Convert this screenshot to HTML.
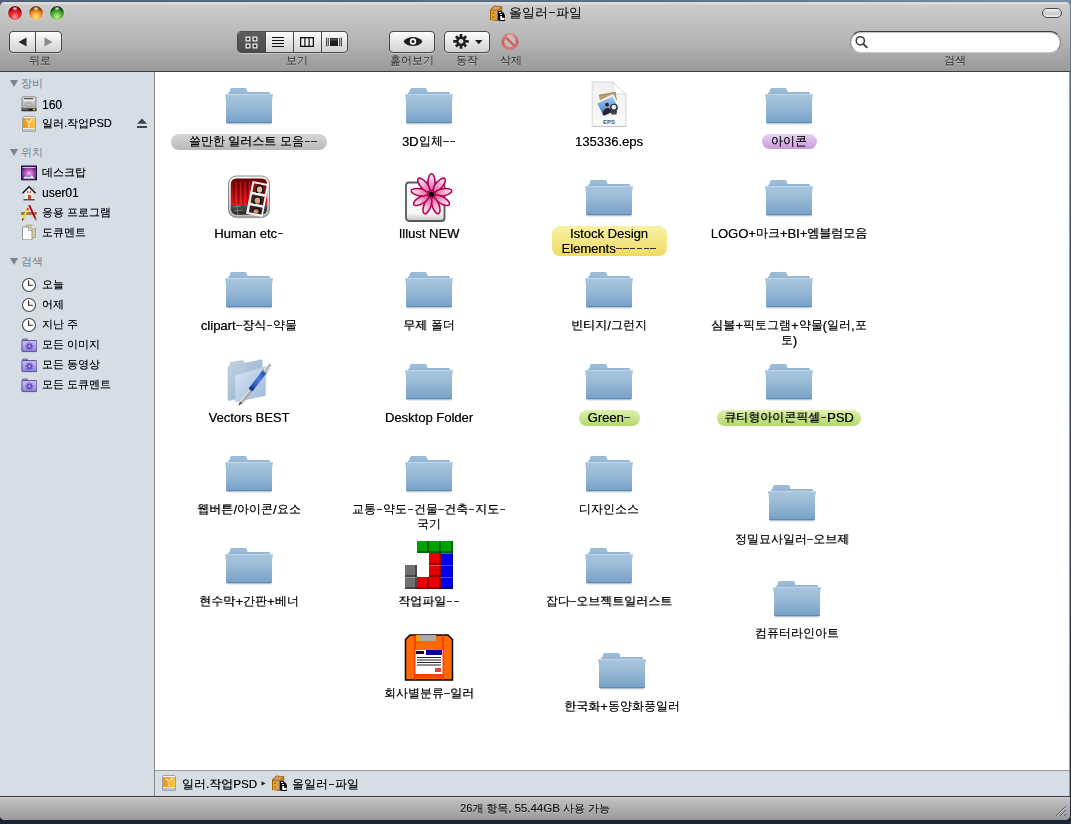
<!DOCTYPE html>
<html><head><meta charset="utf-8">
<style>
*{box-sizing:border-box}
html,body{margin:0;padding:0;width:1071px;height:824px;overflow:hidden;background:#2a3648;font-family:"Liberation Sans",sans-serif}
.abs{position:absolute}
#desk-top{position:absolute;left:0;top:0;width:1071px;height:4px;background:linear-gradient(90deg,#4f6277,#5b7185 60%,#7a92a6)}
#desk-right{position:absolute;left:1069px;top:0;width:2px;height:824px;background:linear-gradient(180deg,#6e8598,#3c4a58 30%,#202a36)}
#desk-bot{position:absolute;left:0;top:818px;width:1071px;height:6px;background:#1d2535}
#win{position:absolute;left:0;top:2px;width:1070px;height:818px;border-radius:5px 5px 5px 5px;overflow:hidden;background:#d6dde5}
#tb{position:absolute;left:0;top:0;width:1070px;height:69px;background:linear-gradient(180deg,#e6e6e6 0px,#cbcbcb 2px,#c4c4c4 14px,#b3b3b3 40px,#989898 69px);border-top:1px solid #d8d8d8}
#tbline{position:absolute;left:0;top:69px;width:1070px;height:1px;background:#404040}
#sidebar{position:absolute;left:0;top:70px;width:154px;height:724px;background:#d6dde5}
#divider{position:absolute;left:154px;top:70px;width:1px;height:724px;background:#8a8a8a}
#content{position:absolute;left:155px;top:70px;width:914px;height:698px;background:#fff}
#rightedge{position:absolute;left:1069px;top:70px;width:1px;height:724px;background:#9a9a9a}
#pathline{position:absolute;left:155px;top:768px;width:914px;height:1px;background:#9a9a9a}
#pathbar{position:absolute;left:155px;top:769px;width:914px;height:25px;background:#d6dde5}
#statline{position:absolute;left:0;top:794px;width:1070px;height:1px;background:#3c3c3c}
#status{position:absolute;left:0;top:795px;width:1070px;height:23px;background:linear-gradient(180deg,#dedede 0,#c2c2c2 1px,#b4b4b4 8px,#9a9a9a 23px)}
.lights span{position:absolute;top:3px;width:14px;height:14px;border-radius:50%}
.tl{will-change:transform;font-size:11px;color:#2a2a2a;position:absolute;text-shadow:0 1px 0 rgba(255,255,255,.35);white-space:nowrap;text-align:center}
.btn{position:absolute;top:29px;height:22px;border:1px solid #4a4a4a;border-radius:4px;background:linear-gradient(180deg,#fdfdfd,#e6e6e6 50%,#d2d2d2);box-shadow:0 1px 0 rgba(255,255,255,.35)}
.side-h{position:absolute;left:10px;font-size:11px;color:#747d8c;white-space:nowrap}
.side-h i{display:inline-block;width:0;height:0;border-left:4.5px solid transparent;border-right:4.5px solid transparent;border-top:7px solid #7c8291;margin-right:3px;vertical-align:0px}
.side-i{position:absolute;left:42px;font-size:11px;color:#000;white-space:nowrap;line-height:14px;will-change:transform;text-shadow:0.3px 0 0 rgba(0,0,0,.5)}
.sico{position:absolute;left:21px;width:16px;height:16px}
.ic{position:absolute;width:48px;height:48px}
.ic svg{overflow:visible;display:block}
.lbl{position:absolute;width:180px;text-align:center;font-size:12px;color:#000;line-height:15px;white-space:nowrap;will-change:transform;text-shadow:0.35px 0 0 rgba(0,0,0,.55)}
.lbl span{display:inline-block;padding:0.5px 0}
.lt{font-style:normal;font-size:13px;line-height:14px;position:relative;top:1px}
.hy{display:inline-block;width:5.3px;height:1px;background:#333;margin:0 0.75px;vertical-align:3.5px}
.pill{position:absolute;border-radius:8px}
.pill.gray{background:linear-gradient(180deg,#d6d6d6,#b9b9b9)}
.pill.purple{background:linear-gradient(180deg,#e8d0f2,#c79bd9)}
.pill.yellow{background:linear-gradient(180deg,#f9f1a6,#efdb62)}
.pill.green{background:linear-gradient(180deg,#def0ae,#b3d768)}
.ls{font-style:normal;font-size:12px;position:relative;top:1px}
</style></head><body>
<svg width="0" height="0" style="position:absolute">
<defs>
 <linearGradient id="gfront" x1="0" y1="0" x2="0" y2="1">
  <stop offset="0" stop-color="#a9c6dd"/><stop offset="0.45" stop-color="#98b9d5"/><stop offset="1" stop-color="#75a0c6"/>
 </linearGradient>
 <linearGradient id="gback" x1="0" y1="0" x2="0" y2="1">
  <stop offset="0" stop-color="#9bbcd7"/><stop offset="1" stop-color="#7aa3c8"/>
 </linearGradient>
 <symbol style="overflow:visible" id="i-folder" viewBox="0 0 48 48">
  <path d="M3,13.5 L3,42 L45,42 L45,13.5 C45,12.5 44.5,12 43.5,12 L22.5,12 L21.5,8.8 C21.3,8.2 20.8,8 20.2,8 L6.5,8 C5.9,8 5.4,8.3 5.2,8.9 L4.3,12.2 C3.5,12.5 3,13 3,13.5 Z" fill="url(#gback)"/>
  <path d="M0,15.2 C0,14.4 0.5,14 1.5,14 L46.5,14 C47.5,14 48,14.4 48,15.2 C47.2,17.5 47,20 47,23 L47,41.8 C47,42.6 46.5,43.2 45.6,43.2 L2.4,43.2 C1.5,43.2 1,42.6 1,41.8 L1,23 C1,20 0.8,17.5 0,15.2 Z" fill="url(#gfront)"/>
  <path d="M1.3,42.6 L46.7,42.6" stroke="#5f89b0" stroke-width="1.2"/>
  <path d="M1,14.5 L47,14.5" stroke="#c3d8e8" stroke-width="0.8"/>
  <path d="M2,44.2 L46,44.2" stroke="rgba(0,0,0,0.10)" stroke-width="1.2"/>
 </symbol>
 <symbol style="overflow:visible" id="i-eps" viewBox="0 0 48 48">
  <linearGradient id="gdoc" x1="0" y1="0" x2="0" y2="1"><stop offset="0" stop-color="#f0f0f0"/><stop offset="1" stop-color="#fafafa"/></linearGradient>
  <linearGradient id="gsky" x1="0" y1="0" x2="0" y2="1"><stop offset="0" stop-color="#a8c8f0"/><stop offset="0.6" stop-color="#6a9ad8"/><stop offset="1" stop-color="#3a62b0"/></linearGradient>
  <path d="M7.2,2 L27.5,2 L41,14.5 L41,46.3 L7.2,46.3 Z" fill="url(#gdoc)" stroke="#cfcfcf" stroke-width="0.8"/>
  <path d="M7.2,46.6 L41,46.6" stroke="#bbb" stroke-width="0.8"/>
  <path d="M27.5,2 C28.5,7 28,12 28.5,14 C32,13 37,14 41,14.5 Z" fill="#fff" stroke="#c8c8c8" stroke-width="0.6"/>
  <g transform="translate(24,26) scale(0.86) translate(-25.8,-27.6)"><path d="M14,14.5 L33.5,11 L35,21 L16,24Z" fill="#a08a5a"/>
  <path d="M14.5,16 L33,12.5 L34,19 L16,22Z" fill="#c8b080" opacity="0.6"/>
  <path d="M9.5,24 L30.5,14 L39.5,31 L18.5,41 Z" fill="#fff" stroke="#e0e0e0" stroke-width="0.5"/>
  <path d="M12,24.8 L29.8,16.4 L37,30.3 L19.2,38.7 Z" fill="url(#gsky)"/>
  <circle cx="23.5" cy="26" r="2.2" fill="#2a2020"/>
  <path d="M18.5,37 C19,31 23,28.5 26.5,30.5 L29,35 L20,39Z" fill="#262230"/>
  <circle cx="31.5" cy="29.5" r="4.4" fill="#2e2e2e"/>
  <circle cx="31.5" cy="29" r="2.8" fill="#e8eef8"/>
  <path d="M27.8,32.8 L35.2,32.8 L34.5,37.5 L28.5,37.5Z" fill="#444"/>
  </g>
  <text x="24" y="43.5" font-size="6" font-family="Liberation Sans" text-anchor="middle" fill="#555" font-weight="bold">EPS</text>
 </symbol>
 <symbol style="overflow:visible" id="i-photo" viewBox="0 0 48 48">
  <linearGradient id="gpf" x1="0" y1="0" x2="0" y2="1"><stop offset="0" stop-color="#fafafa"/><stop offset="1" stop-color="#bdbdbd"/></linearGradient>
  <linearGradient id="gcur" x1="0" y1="0" x2="0" y2="1"><stop offset="0" stop-color="#6a0206"/><stop offset="0.35" stop-color="#b00a10"/><stop offset="0.72" stop-color="#f01818"/><stop offset="0.73" stop-color="#505050"/><stop offset="1" stop-color="#2a2a2a"/></linearGradient>
  <rect x="3" y="4.2" width="42" height="42" rx="8.5" fill="#555" opacity="0.35"/>
  <rect x="3.5" y="4" width="41" height="41" rx="8" fill="url(#gpf)" stroke="#7a7a7a" stroke-width="0.9"/>
  <rect x="5.8" y="6.5" width="36.4" height="36.2" rx="5.5" fill="url(#gcur)"/>
  <g stroke="#5a0004" stroke-opacity="0.55" stroke-width="1.3">
   <path d="M9,7 V32 M13.5,7 V32 M18,7 V32 M22.5,7 V32 M27,7 V32 M40,7 V32"/>
  </g>
  <g stroke="#ff4a3a" stroke-opacity="0.35" stroke-width="1">
   <path d="M11,10 V32 M15.5,10 V32 M20,10 V32 M24.5,10 V32"/>
  </g>
  <path d="M8,35 L16,34 M9,39 L18,38 M12,33 L13,43" stroke="#888" stroke-width="0.8"/>
  <path d="M27.5,9 L44,12.2 L37.5,45 L21,41.8 Z" fill="#f6f6f6"/>
  <path d="M29,11.3 L41.6,13.7 L40,22.2 L27.4,19.8Z" fill="#8a1010"/>
  <path d="M27,22.3 L39.6,24.7 L38,33.2 L25.4,30.8Z" fill="#3a2a24"/>
  <path d="M25,33.3 L37.6,35.7 L36.4,42.6 L23.8,40.2Z" fill="#3a2422"/>
  <path d="M31,21 C30,15 32,12 35,12.5 C38,13 39,16 38.5,21Z" fill="#1a1414"/>
  <ellipse cx="34.6" cy="17.6" rx="2.6" ry="3.2" fill="#e8b8a0"/>
  <path d="M28.5,32 C28,26 30,23.5 33,24 C36,24.5 37,27 36.5,32Z" fill="#141010"/>
  <ellipse cx="32.4" cy="28.6" rx="2.8" ry="3.2" fill="#d8a080"/>
  <path d="M27,40 C27,37 29,35 32,35.5 C35,36 36,38 35.5,41Z" fill="#1a1212"/>
  <ellipse cx="31" cy="39.5" rx="2.6" ry="2.2" fill="#d09070"/>
 </symbol>
 <symbol style="overflow:visible" id="i-flower" viewBox="0 0 48 48">
  <linearGradient id="gpet" x1="0" y1="0" x2="1" y2="0"><stop offset="0" stop-color="#e25a9c"/><stop offset="0.55" stop-color="#f4b4d2"/><stop offset="1" stop-color="#fdf0f6"/></linearGradient>
  <linearGradient id="gsq" x1="0" y1="0" x2="0" y2="1"><stop offset="0" stop-color="#fff"/><stop offset="0.8" stop-color="#f6f6f6"/><stop offset="1" stop-color="#c4c4c4"/></linearGradient>
  <rect x="1" y="10.5" width="38.5" height="38.5" rx="3" fill="url(#gsq)" stroke="#5a5a5a" stroke-width="1.8"/>
  <g transform="translate(26.5,22.3)" stroke="#b8005a" stroke-width="1.6" fill="url(#gpet)">
   <ellipse cx="12" cy="0" rx="8.6" ry="3.5" transform="rotate(-90)"/>
   <ellipse cx="12" cy="0" rx="8.6" ry="3.5" transform="rotate(-50)"/>
   <ellipse cx="12" cy="0" rx="8.6" ry="3.5" transform="rotate(-10)"/>
   <ellipse cx="12" cy="0" rx="8.6" ry="3.5" transform="rotate(30)"/>
   <ellipse cx="12" cy="0" rx="8.6" ry="3.5" transform="rotate(70)"/>
   <ellipse cx="12" cy="0" rx="8.6" ry="3.5" transform="rotate(110)"/>
   <ellipse cx="12" cy="0" rx="8.6" ry="3.5" transform="rotate(150)"/>
   <ellipse cx="12" cy="0" rx="8.6" ry="3.5" transform="rotate(190)"/>
   <ellipse cx="12" cy="0" rx="8.6" ry="3.5" transform="rotate(230)"/>
  </g>
  <circle cx="26.5" cy="22.3" r="2.8" fill="#000"/>
 </symbol>
 <symbol style="overflow:visible" id="i-vectors" viewBox="0 0 48 48">
  <linearGradient id="gvb" x1="0" y1="0" x2="1" y2="1"><stop offset="0" stop-color="#c4d4e6"/><stop offset="1" stop-color="#8eaacb"/></linearGradient>
  <linearGradient id="gvf" x1="0" y1="0" x2="1" y2="1"><stop offset="0" stop-color="#d8e6f4"/><stop offset="1" stop-color="#9cb9d8"/></linearGradient>
  <linearGradient id="gpen" x1="0" y1="0" x2="1" y2="0"><stop offset="0" stop-color="#1a3a9a"/><stop offset="0.5" stop-color="#4a7ae0"/><stop offset="1" stop-color="#1a3a9a"/></linearGradient>
  <path d="M3,12 C3,11 3.5,10.5 4.5,10.2 L5.5,6.5 L18,4.5 L19.5,7.2 L36,3.8 C36.8,3.7 37.2,4 37.2,4.8 L37.2,37.5 L4,44.5 C3.4,44.6 3,44.2 3,43.6 Z" fill="url(#gvb)" stroke="#a8bcd0" stroke-width="0.5"/>
  <path d="M10,19.3 L41,10.5 L40.5,39.7 L10.3,46 Z" fill="url(#gvf)" stroke="#b8cce0" stroke-width="0.5"/>
  <path d="M16,48 L44,12" stroke="#000" stroke-opacity="0.12" stroke-width="3"/>
  <g transform="translate(13.2,50) rotate(-52.5)">
   <path d="M0,0 L5,-1.5 L5,1.5 Z" fill="#555"/>
   <rect x="5" y="-1.6" width="15" height="3.2" fill="#b0b0b0"/>
   <rect x="5" y="-1.6" width="15" height="1.1" fill="#eaeaea"/>
   <rect x="20" y="-2.4" width="28" height="4.8" rx="1" fill="url(#gpen)"/>
   <rect x="22" y="-2.4" width="1.3" height="4.8" fill="#0a2a7a"/>
   <rect x="43" y="-2.4" width="10" height="4.8" rx="2" fill="#e8e8e8"/>
   <rect x="43" y="-0.8" width="10" height="2" fill="#b0b0b0"/>
  </g>
 </symbol>
 <symbol style="overflow:visible" id="i-blocks" viewBox="0 0 48 48">
  <g stroke-width="0">
   <rect x="12" y="1" width="12" height="12" fill="#00a000"/><rect x="24" y="1" width="12" height="12" fill="#00a000"/><rect x="36" y="1" width="12" height="12" fill="#00a000"/>
   <rect x="24" y="13" width="12" height="12" fill="#e80000"/><rect x="36" y="13" width="12" height="12" fill="#0000f0"/>
   <rect x="0" y="25" width="12" height="12" fill="#707070"/><rect x="24" y="25" width="12" height="12" fill="#e80000"/><rect x="36" y="25" width="12" height="12" fill="#0000f0"/>
   <rect x="0" y="37" width="12" height="12" fill="#707070"/><rect x="12" y="37" width="12" height="12" fill="#e80000"/><rect x="24" y="37" width="12" height="12" fill="#e80000"/><rect x="36" y="37" width="12" height="12" fill="#0000f0"/>
  </g>
  <g fill="rgba(0,0,0,0.35)">
   <rect x="22" y="1" width="2" height="12"/><rect x="34" y="1" width="2" height="12"/><rect x="46" y="1" width="2" height="12"/><rect x="12" y="11" width="36" height="2"/>
   <rect x="34" y="13" width="2" height="12"/><rect x="24" y="23" width="12" height="2"/>
   <rect x="10" y="25" width="2" height="24"/><rect x="0" y="35" width="12" height="2"/><rect x="34" y="25" width="2" height="24"/><rect x="24" y="35" width="12" height="2"/>
   <rect x="0" y="47" width="48" height="2"/><rect x="22" y="37" width="2" height="12"/><rect x="46" y="13" width="2" height="36"/>
  </g>
  <g fill="rgba(255,255,255,0.3)">
   <rect x="24" y="25" width="12" height="1"/><rect x="36" y="13" width="12" height="1"/><rect x="36" y="25" width="12" height="1"/><rect x="36" y="37" width="12" height="1"/><rect x="0" y="37" width="12" height="1"/>
  </g>
 </symbol>
 <symbol style="overflow:visible" id="i-floppy" viewBox="0 0 48 48">
  <path d="M5,3 L43,3 L47.5,7.5 L47.5,48 L0.5,48 L0.5,7.5 Z" fill="#ff6a00" stroke="#000" stroke-width="1.5"/>
  <rect x="11" y="3" width="20" height="6" fill="#aaa"/>
  <rect x="11" y="3" width="3" height="6" fill="#ff9a00"/>
  <path d="M10,3 V48 M38,3 V48" stroke="#ff2a00" stroke-width="1.3"/>
  <rect x="10.5" y="18" width="27" height="24" fill="#fff"/>
  <rect x="21" y="18" width="16" height="5" fill="#0000a0"/>
  <rect x="11" y="19" width="8" height="3" fill="#111"/>
  <path d="M12,25.5 H36 M12,28 H36 M12,30.5 H36 M12,33 H36" stroke="#222" stroke-width="1"/>
  <path d="M30,37 H36 M30,39 H36" stroke="#e00000" stroke-width="1.3"/>
  <rect x="10.5" y="42" width="27" height="4" fill="#ff4000"/>
 </symbol>
</defs>
</svg>

<div id="desk-top"></div>
<div id="desk-bot"></div>
<div id="desk-right"></div>
<div id="win">
 <div id="tb"></div>
 <div id="tbline"></div>
 <div id="sidebar"></div>
 <div id="divider"></div>
 <div id="content"></div>
 <div id="rightedge"></div>
 <div id="pathline"></div>
 <div id="pathbar"></div>
 <div id="statline"></div>
 <div id="status"></div>
</div>

<!-- traffic lights -->
<svg class="abs" style="left:7px;top:5px" width="58" height="16" viewBox="0 0 58 16">
 <defs>
  <radialGradient id="tlr" cx="0.5" cy="0.78" r="0.62"><stop offset="0" stop-color="#ffb4bc"/><stop offset="0.45" stop-color="#f0303a"/><stop offset="0.85" stop-color="#c8141c"/><stop offset="1" stop-color="#7a060a"/></radialGradient>
  <radialGradient id="tly" cx="0.5" cy="0.78" r="0.62"><stop offset="0" stop-color="#ffe888"/><stop offset="0.45" stop-color="#f8b040"/><stop offset="0.85" stop-color="#d06a10"/><stop offset="1" stop-color="#7a3a06"/></radialGradient>
  <radialGradient id="tlg" cx="0.5" cy="0.78" r="0.62"><stop offset="0" stop-color="#c8f0a0"/><stop offset="0.45" stop-color="#6cc048"/><stop offset="0.85" stop-color="#2e8a1a"/><stop offset="1" stop-color="#14460a"/></radialGradient>
  <radialGradient id="tlh" cx="0.5" cy="0.5" r="0.5"><stop offset="0" stop-color="#fff" stop-opacity="0.95"/><stop offset="1" stop-color="#fff" stop-opacity="0"/></radialGradient>
 </defs>
 <circle cx="8" cy="8" r="6.9" fill="url(#tlr)"/>
 <circle cx="29" cy="8" r="6.9" fill="url(#tly)"/>
 <circle cx="50" cy="8" r="6.9" fill="url(#tlg)"/>
 <ellipse cx="8" cy="3.6" rx="3" ry="2" fill="url(#tlh)"/>
 <ellipse cx="29" cy="3.6" rx="3" ry="2" fill="url(#tlh)"/>
 <ellipse cx="50" cy="3.6" rx="3" ry="2" fill="url(#tlh)"/>
 <circle cx="8" cy="8" r="7.3" fill="none" stroke="rgba(255,255,255,.35)" stroke-width="0.6"/>
 <circle cx="29" cy="8" r="7.3" fill="none" stroke="rgba(255,255,255,.35)" stroke-width="0.6"/>
 <circle cx="50" cy="8" r="7.3" fill="none" stroke="rgba(255,255,255,.35)" stroke-width="0.6"/>
</svg>
<!-- title -->
<svg class="abs" style="left:489px;top:5px" width="16" height="16" viewBox="0 0 16 16">
 <path d="M1,4.6 L5.3,0.4 L13.2,1.2 L13.2,13.6 L8.9,15.9 L1,15.1 Z" fill="#a0640c"/>
 <path d="M2,4.7 L5.6,1.3 L12.2,1.9 L8.6,5.1 Z" fill="#d49a68"/>
 <rect x="2" y="5.6" width="6.2" height="9.2" fill="#d09a68"/>
 <rect x="2.6" y="6.8" width="3" height="3" fill="#ffb000"/><rect x="2.6" y="10.6" width="3" height="3" fill="#ffb000"/>
 <rect x="3.6" y="7.6" width="1" height="1.4" fill="#5a2a00"/><rect x="3.6" y="11.4" width="1" height="1.4" fill="#5a2a00"/>
 <path d="M9,5.2 L12.4,2.2 L12.4,13.2 L9,15.1Z" fill="#b8800c"/>
 <path d="M9,6 H12.5 L13.5,7.5 H14.5 L15.2,9 L16.8,11 V16 H10.4 L9,14.8Z" fill="#000"/>
 <rect x="10" y="7" width="2" height="1" fill="#fff"/><rect x="11" y="9" width="2" height="1" fill="#fff"/>
 <path d="M11.2,11 H13 V12.8 H15.6 V15 H11.2Z" fill="#fff"/>
</svg>
<div class="abs" style="left:508.5px;top:4px;font-size:13px;color:#111;white-space:nowrap;will-change:transform;text-shadow:0.3px 0 0 rgba(0,0,0,.45)">올일러<b class="hy" style="width:6px;margin:0 0.9px;vertical-align:4px;background:#222"></b>파일</div>
<!-- pill -->
<div class="abs" style="left:1042px;top:8px;width:20px;height:10px;border:1px solid #4a4a4a;border-radius:5px;background:linear-gradient(180deg,#f4f4f4,#c9c9c9 55%,#eeeeee)"></div>

<!-- back/forward -->
<div class="btn" style="left:9px;width:53px;top:31px"></div>
<div class="abs" style="left:35px;top:32px;width:1px;height:20px;background:#4a4a4a"></div>
<svg class="abs" style="left:18px;top:37px" width="9" height="10"><path d="M0.5,5 L8.5,0.5 L8.5,9.5Z" fill="#2a2a2a"/></svg>
<svg class="abs" style="left:44px;top:37px" width="9" height="10"><path d="M8.5,5 L0.5,0.5 L0.5,9.5Z" fill="#8a8a8a"/></svg>
<div class="tl" style="left:12.5px;width:53px;top:53px">뒤로</div>

<!-- view buttons -->
<div class="btn" style="left:237px;width:111px;top:31px"></div>
<div class="abs" style="left:238px;top:32px;width:27px;height:20px;border-radius:3px 0 0 3px;background:linear-gradient(180deg,#5e5e5e,#4a4a4a)"></div>
<div class="abs" style="left:265px;top:32px;width:1px;height:20px;background:#4a4a4a"></div>
<div class="abs" style="left:293px;top:32px;width:1px;height:20px;background:#4a4a4a"></div>
<div class="abs" style="left:321px;top:32px;width:1px;height:20px;background:#4a4a4a"></div>
<svg class="abs" style="left:245px;top:36px" width="13" height="13"><g fill="#3a3a3a" stroke="#fff" stroke-width="1.1"><rect x="1.1" y="1.1" width="3.8" height="3.8"/><rect x="8.1" y="1.1" width="3.8" height="3.8"/><rect x="1.1" y="8.1" width="3.8" height="3.8"/><rect x="8.1" y="8.1" width="3.8" height="3.8"/></g></svg>
<svg class="abs" style="left:272px;top:36px" width="12" height="12"><path d="M0,1.5 H12 M0,4.5 H12 M0,7.5 H12 M0,10.5 H12" stroke="#111" stroke-width="1.2"/></svg>
<svg class="abs" style="left:300px;top:37px" width="14" height="10"><rect x="0.65" y="0.65" width="12.7" height="8.7" fill="#f4f4f4" stroke="#111" stroke-width="1.3"/><path d="M4.9,1 V9 M9.1,1 V9" stroke="#111" stroke-width="1.2"/></svg>
<svg class="abs" style="left:326px;top:37px" width="16" height="10"><rect x="4" y="1" width="8" height="8" fill="#1e1e1e"/><rect x="4.5" y="1.5" width="7" height="2" fill="#555"/><path d="M0.6,0.5 V9.5 M2.3,1 V9 M13.7,1 V9 M15.4,0.5 V9.5" stroke="#222" stroke-width="0.9"/></svg>
<div class="tl" style="left:272px;width:50px;top:53px">보기</div>

<!-- quick look -->
<div class="btn" style="left:389px;width:46px;top:31px"></div>
<svg class="abs" style="left:403px;top:36px" width="20" height="11" viewBox="0 0 20 11"><path d="M0.5,5.5 C4,-0.5 16,-0.5 19.5,5.5 C16,11.5 4,11.5 0.5,5.5Z" fill="#1e1e1e"/><circle cx="10" cy="5.5" r="3.2" fill="#fff"/><circle cx="10" cy="5.5" r="1.6" fill="#1e1e1e"/></svg>
<div class="tl" style="left:382px;width:60px;top:53px">훑어보기</div>

<!-- action -->
<div class="btn" style="left:444px;width:46px;top:31px"></div>
<svg class="abs" style="left:452.5px;top:34px" width="16" height="15" viewBox="0 0 16 15.5">
 <g fill="#1e1e1e"><circle cx="8" cy="7.6" r="5"/>
 <rect x="6.6" y="0" width="2.8" height="15.2"/><rect x="0" y="6.2" width="16" height="2.8"/>
 <rect x="6.6" y="0.2" width="2.8" height="14.8" transform="rotate(45 8 7.6)"/><rect x="6.6" y="0.2" width="2.8" height="14.8" transform="rotate(-45 8 7.6)"/></g>
 <circle cx="8" cy="7.6" r="2.5" fill="#dedede"/>
</svg>
<svg class="abs" style="left:475px;top:40px" width="8" height="5"><path d="M0,0 H7.5 L3.75,4.3Z" fill="#1e1e1e"/></svg>
<div class="tl" style="left:444px;width:45px;top:53px">동작</div>

<!-- delete -->
<svg class="abs" style="left:501px;top:33px" width="18" height="17" viewBox="0 0 18 17">
 <defs><linearGradient id="gdel" x1="0" y1="0" x2="0" y2="1"><stop offset="0" stop-color="#e88a8a"/><stop offset="0.5" stop-color="#d85a5a"/><stop offset="1" stop-color="#e07878"/></linearGradient></defs>
 <circle cx="9" cy="8.5" r="7" fill="rgba(255,255,255,.18)" stroke="url(#gdel)" stroke-width="2.6"/>
 <path d="M4.3,3.8 L13.7,13.2" stroke="#d86060" stroke-width="2.6"/>
 <circle cx="9" cy="8.5" r="8.4" fill="none" stroke="rgba(120,40,40,.3)" stroke-width="0.5"/>
 <path d="M5,4 A6,6 0 0 1 12,3" stroke="rgba(255,255,255,.45)" stroke-width="0.8" fill="none"/>
</svg>
<div class="tl" style="left:496px;width:30px;top:53px">삭제</div>

<!-- search -->
<div class="abs" style="left:850px;top:31px;width:211px;height:22px;border-radius:11px;background:#fff;border:1px solid #8a8a8a;border-top-color:#3a3a3a;border-bottom-color:#c8c8c8;box-shadow:inset 0 1px 1px rgba(0,0,0,.25)"></div>
<svg class="abs" style="left:855px;top:35px" width="14" height="14" viewBox="0 0 14 14"><circle cx="5.3" cy="5.8" r="4.1" fill="none" stroke="#3a3a3a" stroke-width="1.5"/><path d="M8.3,8.8 L11.8,12.3" stroke="#3a3a3a" stroke-width="1.9" stroke-linecap="round"/></svg>
<div class="tl" style="left:930px;width:50px;top:53px">검색</div>

<!-- sidebar -->
<div class="side-h" style="top:76px"><i></i>장비</div>
<svg class="sico" style="top:96px" viewBox="0 0 16 16"><defs><linearGradient id="ghd" x1="0" y1="0" x2="0" y2="1"><stop offset="0" stop-color="#e4e4e4"/><stop offset="1" stop-color="#9a9a9a"/></linearGradient></defs><rect x="1" y="0.8" width="14" height="14" rx="1" fill="url(#ghd)" stroke="#6a6a6a" stroke-width="0.7"/><rect x="3" y="2.2" width="9" height="1.3" fill="#333"/><rect x="3" y="3.5" width="9" height="1.2" fill="#fff"/><ellipse cx="7.5" cy="8.6" rx="3.6" ry="1.8" fill="#bdbdbd" stroke="#8a8a8a" stroke-width="0.5"/><rect x="0.5" y="12.2" width="15" height="3" fill="#3a3a3a"/><rect x="1.5" y="12.6" width="5" height="1" fill="#888"/><circle cx="9" cy="13.7" r="0.7" fill="#000"/><circle cx="10.8" cy="13.7" r="0.7" fill="#000"/><circle cx="13" cy="13.5" r="0.9" fill="#f0f000"/></svg>
<div class="side-i" style="top:97px"><i class="ls">160</i></div>
<svg class="sico" style="top:116px" viewBox="0 0 16 16"><defs><linearGradient id="gor1" x1="0" y1="0" x2="1" y2="0"><stop offset="0" stop-color="#f09010"/><stop offset="0.5" stop-color="#f8a828"/><stop offset="1" stop-color="#fcc848"/></linearGradient></defs><rect x="1.6" y="0.6" width="12.8" height="15" rx="1.2" fill="#b0b0b0" stroke="#7a7a7a" stroke-width="0.6"/><rect x="2" y="1" width="12" height="1.2" fill="#fafafa"/><rect x="2" y="2.2" width="12" height="9.8" fill="url(#gor1)"/><path d="M5,4 L8,6.5 L11,4 M8,6.5 V10" stroke="#ffe8c0" stroke-width="1.1" fill="none"/><circle cx="10.8" cy="3.8" r="0.9" fill="#fff"/><rect x="7" y="10.2" width="2" height="0.8" fill="#fff"/><rect x="2" y="12" width="12" height="0.9" fill="#f4f4f4"/><rect x="2" y="12.9" width="12" height="2.4" fill="#c0c0c0"/><circle cx="11" cy="14.2" r="0.8" fill="#f0f000"/></svg>
<div class="side-i" style="top:116px">일러.작업PSD</div>
<svg class="abs" style="left:136px;top:118px" width="12" height="11"><path d="M6,0.5 L11,5.8 H1Z" fill="#404448"/><rect x="1" y="8" width="10" height="2" fill="#404448"/></svg>

<div class="side-h" style="top:145px"><i></i>위치</div>
<svg class="sico" style="top:165px" viewBox="0 0 16 16"><defs><radialGradient id="gdesk" cx="0.5" cy="0.55" r="0.7"><stop offset="0" stop-color="#f8b0f0"/><stop offset="0.35" stop-color="#c060c8"/><stop offset="0.75" stop-color="#602880"/><stop offset="1" stop-color="#201038"/></radialGradient></defs><rect x="0.6" y="1" width="15" height="13.8" fill="url(#gdesk)" stroke="#140a24" stroke-width="1"/><rect x="1.5" y="2" width="13" height="1" fill="#d8b8e0"/><path d="M2,13.6 L4,11.5 H12 L14,13.6Z" fill="#f0f0f0"/><circle cx="6.2" cy="11.3" r="1" fill="#3a8cf8"/><circle cx="8.5" cy="11.3" r="1" fill="#3a8cf8"/><circle cx="10.8" cy="11.3" r="0.9" fill="#ddd"/></svg>
<div class="side-i" style="top:165px">데스크탑</div>
<svg class="sico" style="top:185px" viewBox="0 0 16 16"><path d="M4,7.5 L8,3.5 L12,7.5 V14.3 H4Z" fill="#f4efe2"/><path d="M1.5,8.3 L8,1.8 L14.5,8.3" fill="none" stroke="#151515" stroke-width="1.5"/><rect x="12" y="1.5" width="1.5" height="4" fill="#c8b890"/><rect x="6.2" y="6.2" width="1" height="1.8" fill="#b01010"/><rect x="8.8" y="6.2" width="1" height="1.8" fill="#b01010"/><rect x="7" y="10" width="2.8" height="4.3" fill="#d84010"/><rect x="8.7" y="11.5" width="0.8" height="1" fill="#222"/><rect x="2.5" y="14.3" width="11" height="1" fill="#151515"/></svg>
<div class="side-i" style="top:185px"><i class="ls">user01</i></div>
<svg class="sico" style="top:205px" viewBox="0 0 16 16"><rect x="0.5" y="7.2" width="15" height="2.4" fill="#a8783c" stroke="#7a5020" stroke-width="0.4"/><path d="M1.6,15.2 L6.6,4.2" stroke="#e8e010" stroke-width="2"/><path d="M6.2,5 L7.2,3" stroke="#f03060" stroke-width="2"/><path d="M1.2,15.6 L2.2,13.6" stroke="#333" stroke-width="1.2"/><path d="M8.4,0.5 L14.2,13" stroke="#b00818" stroke-width="1.8" stroke-linecap="round"/><path d="M14,13 L15.3,15.3" stroke="#a07050" stroke-width="1.6"/></svg>
<div class="side-i" style="top:205px">응용 프로그램</div>
<svg class="sico" style="top:224px" viewBox="0 0 16 16"><path d="M5.2,1 H11 L14.5,4.5 V13.5 H5.2Z" fill="#d4cc98" stroke="#8a8a80" stroke-width="0.6"/><path d="M11,1 V4.5 H14.5" fill="#fff" stroke="#8a8a80" stroke-width="0.5"/><path d="M1.5,3 H7.5 L11,6.5 V15.8 H1.5Z" fill="#fbfbfb" stroke="#7a7a7a" stroke-width="0.7"/><path d="M7.5,3 V6.5 H11" fill="#e8e8e8" stroke="#7a7a7a" stroke-width="0.6"/></svg>
<div class="side-i" style="top:225px">도큐멘트</div>

<div class="side-h" style="top:254px"><i></i>검색</div>
<svg class="sico" style="top:277px" viewBox="0 0 16 16"><circle cx="8" cy="8" r="6.5" fill="#fff" stroke="#4a4a4a" stroke-width="1.1"/><path d="M7.6,3.6 V8.2 H11.8" fill="none" stroke="#222" stroke-width="1.1"/></svg>
<div class="side-i" style="top:277px">오늘</div>
<svg class="sico" style="top:297px" viewBox="0 0 16 16"><circle cx="8" cy="8" r="6.5" fill="#fff" stroke="#4a4a4a" stroke-width="1.1"/><path d="M7.6,3.6 V8.2 H11.8" fill="none" stroke="#222" stroke-width="1.1"/></svg>
<div class="side-i" style="top:297px">어제</div>
<svg class="sico" style="top:317px" viewBox="0 0 16 16"><circle cx="8" cy="8" r="6.5" fill="#fff" stroke="#4a4a4a" stroke-width="1.1"/><path d="M7.6,3.6 V8.2 H11.8" fill="none" stroke="#222" stroke-width="1.1"/></svg>
<div class="side-i" style="top:317px">지난 주</div>
<svg class="sico" style="top:337px" viewBox="0 0 16 16"><defs><linearGradient id="gsm1" x1="0" y1="0" x2="0" y2="1"><stop offset="0" stop-color="#cfc6f4"/><stop offset="1" stop-color="#8d7ed8"/></linearGradient></defs><path d="M1.2,3.5 L1.8,2 H6.2 L6.8,3.5 Z" fill="#b8aee8" stroke="#5a4a98" stroke-width="0.8"/><rect x="0.9" y="3.6" width="15" height="11" rx="0.6" fill="url(#gsm1)" stroke="#52448e" stroke-width="0.9"/><g fill="#5a48b8" opacity="0.85"><circle cx="8.4" cy="9.2" r="2.6"/><rect x="7.7" y="5.2" width="1.4" height="8" rx="0.5"/><rect x="4.4" y="8.5" width="8" height="1.4" rx="0.5"/><rect x="7.7" y="5.2" width="1.4" height="8" rx="0.5" transform="rotate(45 8.4 9.2)"/><rect x="7.7" y="5.2" width="1.4" height="8" rx="0.5" transform="rotate(-45 8.4 9.2)"/></g><circle cx="8.4" cy="9.2" r="1" fill="#c8c0f0"/></svg>
<div class="side-i" style="top:337px">모든 이미지</div>
<svg class="sico" style="top:357px" viewBox="0 0 16 16"><defs><linearGradient id="gsm2" x1="0" y1="0" x2="0" y2="1"><stop offset="0" stop-color="#cfc6f4"/><stop offset="1" stop-color="#8d7ed8"/></linearGradient></defs><path d="M1.2,3.5 L1.8,2 H6.2 L6.8,3.5 Z" fill="#b8aee8" stroke="#5a4a98" stroke-width="0.8"/><rect x="0.9" y="3.6" width="15" height="11" rx="0.6" fill="url(#gsm2)" stroke="#52448e" stroke-width="0.9"/><g fill="#5a48b8" opacity="0.85"><circle cx="8.4" cy="9.2" r="2.6"/><rect x="7.7" y="5.2" width="1.4" height="8" rx="0.5"/><rect x="4.4" y="8.5" width="8" height="1.4" rx="0.5"/><rect x="7.7" y="5.2" width="1.4" height="8" rx="0.5" transform="rotate(45 8.4 9.2)"/><rect x="7.7" y="5.2" width="1.4" height="8" rx="0.5" transform="rotate(-45 8.4 9.2)"/></g><circle cx="8.4" cy="9.2" r="1" fill="#c8c0f0"/></svg>
<div class="side-i" style="top:357px">모든 동영상</div>
<svg class="sico" style="top:377px" viewBox="0 0 16 16"><defs><linearGradient id="gsm3" x1="0" y1="0" x2="0" y2="1"><stop offset="0" stop-color="#cfc6f4"/><stop offset="1" stop-color="#8d7ed8"/></linearGradient></defs><path d="M1.2,3.5 L1.8,2 H6.2 L6.8,3.5 Z" fill="#b8aee8" stroke="#5a4a98" stroke-width="0.8"/><rect x="0.9" y="3.6" width="15" height="11" rx="0.6" fill="url(#gsm3)" stroke="#52448e" stroke-width="0.9"/><g fill="#5a48b8" opacity="0.85"><circle cx="8.4" cy="9.2" r="2.6"/><rect x="7.7" y="5.2" width="1.4" height="8" rx="0.5"/><rect x="4.4" y="8.5" width="8" height="1.4" rx="0.5"/><rect x="7.7" y="5.2" width="1.4" height="8" rx="0.5" transform="rotate(45 8.4 9.2)"/><rect x="7.7" y="5.2" width="1.4" height="8" rx="0.5" transform="rotate(-45 8.4 9.2)"/></g><circle cx="8.4" cy="9.2" r="1" fill="#c8c0f0"/></svg>
<div class="side-i" style="top:377px">모든 도큐멘트</div>

<!-- content items -->
<div class="ic" style="left:225px;top:80px"><svg width="48" height="48" viewBox="0 0 48 48"><use href="#i-folder"/></svg></div>
<div class="pill gray" style="left:171px;top:134px;width:156px;height:16px"></div>
<div class="lbl" style="left:162.5px;top:133px"><span>쓸만한<i class="lt"> </i>일러스트<i class="lt"> </i>모음<i class="lt"><b class="hy"></b><b class="hy"></b></i></span></div>
<div class="ic" style="left:405px;top:80px"><svg width="48" height="48" viewBox="0 0 48 48"><use href="#i-folder"/></svg></div>
<div class="lbl" style="left:339px;top:133px"><span><i class="lt">3D</i>입체<i class="lt"><b class="hy"></b><b class="hy"></b></i></span></div>
<div class="ic" style="left:585px;top:80px"><svg width="48" height="48" viewBox="0 0 48 48"><use href="#i-eps"/></svg></div>
<div class="lbl" style="left:519px;top:133px"><span><i class="lt">135336.eps</i></span></div>
<div class="ic" style="left:765px;top:80px"><svg width="48" height="48" viewBox="0 0 48 48"><use href="#i-folder"/></svg></div>
<div class="pill purple" style="left:761.5px;top:134px;width:55px;height:15px"></div>
<div class="lbl" style="left:699px;top:133px"><span>아이콘</span></div>
<div class="ic" style="left:225px;top:172px"><svg width="48" height="48" viewBox="0 0 48 48"><use href="#i-photo"/></svg></div>
<div class="lbl" style="left:159px;top:225px"><span><i class="lt">Human etc<b class="hy"></b></i></span></div>
<div class="ic" style="left:405px;top:172px"><svg width="48" height="48" viewBox="0 0 48 48"><use href="#i-flower"/></svg></div>
<div class="lbl" style="left:339px;top:225px"><span><i class="lt">Illust NEW</i></span></div>
<div class="ic" style="left:585px;top:172px"><svg width="48" height="48" viewBox="0 0 48 48"><use href="#i-folder"/></svg></div>
<div class="pill yellow" style="left:552px;top:226px;width:114.5px;height:30px"></div>
<div class="lbl" style="left:519px;top:225px"><span><i class="lt">Istock Design</i><br><i class="lt">Elements<b class="hy"></b><b class="hy"></b><b class="hy"></b><b class="hy"></b><b class="hy"></b><b class="hy"></b></i></span></div>
<div class="ic" style="left:765px;top:172px"><svg width="48" height="48" viewBox="0 0 48 48"><use href="#i-folder"/></svg></div>
<div class="lbl" style="left:699px;top:225px"><span><i class="lt">LOGO+</i>마크<i class="lt">+BI+</i>엠블럼모음</span></div>
<div class="ic" style="left:225px;top:264px"><svg width="48" height="48" viewBox="0 0 48 48"><use href="#i-folder"/></svg></div>
<div class="lbl" style="left:159px;top:317px"><span><i class="lt">clipart<b class="hy"></b></i>장식<i class="lt"><b class="hy"></b></i>약물</span></div>
<div class="ic" style="left:405px;top:264px"><svg width="48" height="48" viewBox="0 0 48 48"><use href="#i-folder"/></svg></div>
<div class="lbl" style="left:339px;top:317px"><span>무제<i class="lt"> </i>폴더</span></div>
<div class="ic" style="left:585px;top:264px"><svg width="48" height="48" viewBox="0 0 48 48"><use href="#i-folder"/></svg></div>
<div class="lbl" style="left:519px;top:317px"><span>빈티지<i class="lt">/</i>그런지</span></div>
<div class="ic" style="left:765px;top:264px"><svg width="48" height="48" viewBox="0 0 48 48"><use href="#i-folder"/></svg></div>
<div class="lbl" style="left:699px;top:317px"><span>심볼<i class="lt">+</i>픽토그램<i class="lt">+</i>약물<i class="lt">(</i>일러<i class="lt">,</i>포<br>토<i class="lt">)</i></span></div>
<div class="ic" style="left:225px;top:356px"><svg width="48" height="48" viewBox="0 0 48 48"><use href="#i-vectors"/></svg></div>
<div class="lbl" style="left:159px;top:409px"><span><i class="lt">Vectors BEST</i></span></div>
<div class="ic" style="left:405px;top:356px"><svg width="48" height="48" viewBox="0 0 48 48"><use href="#i-folder"/></svg></div>
<div class="lbl" style="left:339px;top:409px"><span><i class="lt">Desktop Folder</i></span></div>
<div class="ic" style="left:585px;top:356px"><svg width="48" height="48" viewBox="0 0 48 48"><use href="#i-folder"/></svg></div>
<div class="pill green" style="left:578.5px;top:410px;width:61px;height:15.5px"></div>
<div class="lbl" style="left:519px;top:409px"><span><i class="lt">Green<b class="hy"></b></i></span></div>
<div class="ic" style="left:765px;top:356px"><svg width="48" height="48" viewBox="0 0 48 48"><use href="#i-folder"/></svg></div>
<div class="pill green" style="left:716.5px;top:410px;width:144.5px;height:15.5px"></div>
<div class="lbl" style="left:699px;top:409px"><span>큐티형아이콘픽셀<i class="lt"><b class="hy"></b>PSD</i></span></div>
<div class="ic" style="left:225px;top:448px"><svg width="48" height="48" viewBox="0 0 48 48"><use href="#i-folder"/></svg></div>
<div class="lbl" style="left:159px;top:501px"><span>웹버튼<i class="lt">/</i>아이콘<i class="lt">/</i>요소</span></div>
<div class="ic" style="left:405px;top:448px"><svg width="48" height="48" viewBox="0 0 48 48"><use href="#i-folder"/></svg></div>
<div class="lbl" style="left:339px;top:501px"><span>교통<i class="lt"><b class="hy"></b></i>약도<i class="lt"><b class="hy"></b></i>건물<i class="lt"><b class="hy"></b></i>건축<i class="lt"><b class="hy"></b></i>지도<i class="lt"><b class="hy"></b></i><br>국기</span></div>
<div class="ic" style="left:585px;top:448px"><svg width="48" height="48" viewBox="0 0 48 48"><use href="#i-folder"/></svg></div>
<div class="lbl" style="left:519px;top:501px"><span>디자인소스</span></div>
<div class="ic" style="left:768px;top:477px"><svg width="48" height="48" viewBox="0 0 48 48"><use href="#i-folder"/></svg></div>
<div class="lbl" style="left:702px;top:531px"><span>정밀묘사일러<i class="lt"><b class="hy"></b></i>오브제</span></div>
<div class="ic" style="left:225px;top:540px"><svg width="48" height="48" viewBox="0 0 48 48"><use href="#i-folder"/></svg></div>
<div class="lbl" style="left:159px;top:593px"><span>현수막<i class="lt">+</i>간판<i class="lt">+</i>베너</span></div>
<div class="ic" style="left:405px;top:540px"><svg width="48" height="48" viewBox="0 0 48 48"><use href="#i-blocks"/></svg></div>
<div class="lbl" style="left:339px;top:593px"><span>작업파일<i class="lt"><b class="hy"></b><b class="hy"></b></i></span></div>
<div class="ic" style="left:585px;top:540px"><svg width="48" height="48" viewBox="0 0 48 48"><use href="#i-folder"/></svg></div>
<div class="lbl" style="left:519px;top:593px"><span>잡다<i class="lt"><b class="hy"></b></i>오브젝트일러스트</span></div>
<div class="ic" style="left:773px;top:573px"><svg width="48" height="48" viewBox="0 0 48 48"><use href="#i-folder"/></svg></div>
<div class="lbl" style="left:707px;top:625px"><span>컴퓨터라인아트</span></div>
<div class="ic" style="left:405px;top:632px"><svg width="48" height="48" viewBox="0 0 48 48"><use href="#i-floppy"/></svg></div>
<div class="lbl" style="left:339px;top:685px"><span>회사별분류<i class="lt"><b class="hy"></b></i>일러</span></div>
<div class="ic" style="left:598px;top:645px"><svg width="48" height="48" viewBox="0 0 48 48"><use href="#i-folder"/></svg></div>
<div class="lbl" style="left:532px;top:698px"><span>한국화<i class="lt">+</i>동양화풍일러</span></div>

<!-- path bar -->
<svg class="abs" style="left:161px;top:775px;width:16px;height:16px" viewBox="0 0 16 16"><defs><linearGradient id="gor2" x1="0" y1="0" x2="1" y2="0"><stop offset="0" stop-color="#f09010"/><stop offset="0.5" stop-color="#f8a828"/><stop offset="1" stop-color="#fcc848"/></linearGradient></defs><rect x="1.6" y="0.6" width="12.8" height="15" rx="1.2" fill="#b0b0b0" stroke="#7a7a7a" stroke-width="0.6"/><rect x="2" y="1" width="12" height="1.2" fill="#fafafa"/><rect x="2" y="2.2" width="12" height="9.8" fill="url(#gor2)"/><path d="M5,4 L8,6.5 L11,4 M8,6.5 V10" stroke="#ffe8c0" stroke-width="1.1" fill="none"/><circle cx="10.8" cy="3.8" r="0.9" fill="#fff"/><rect x="7" y="10.2" width="2" height="0.8" fill="#fff"/><rect x="2" y="12" width="12" height="0.9" fill="#f4f4f4"/><rect x="2" y="12.9" width="12" height="2.4" fill="#c0c0c0"/><circle cx="11" cy="14.2" r="0.8" fill="#f0f000"/></svg>
<div class="abs" style="left:182px;top:776px;font-size:12px;color:#000;white-space:nowrap;will-change:transform;text-shadow:0.3px 0 0 rgba(0,0,0,.5)">일러.작업<i style="font-style:normal;font-size:11.5px">PSD</i></div>
<svg class="abs" style="left:261px;top:781px" width="5" height="5"><path d="M0.5,0.3 L4.5,2.5 L0.5,4.7Z" fill="#222"/></svg>
<svg class="abs" style="left:271px;top:775px" width="16" height="16" viewBox="0 0 16 16">
 <path d="M1,4.6 L5.3,0.4 L13.2,1.2 L13.2,13.6 L8.9,15.9 L1,15.1 Z" fill="#a0640c"/>
 <path d="M2,4.7 L5.6,1.3 L12.2,1.9 L8.6,5.1 Z" fill="#d49a68"/>
 <rect x="2" y="5.6" width="6.2" height="9.2" fill="#d09a68"/>
 <rect x="2.6" y="6.8" width="3" height="3" fill="#ffb000"/><rect x="2.6" y="10.6" width="3" height="3" fill="#ffb000"/>
 <rect x="3.6" y="7.6" width="1" height="1.4" fill="#5a2a00"/><rect x="3.6" y="11.4" width="1" height="1.4" fill="#5a2a00"/>
 <path d="M9,5.2 L12.4,2.2 L12.4,13.2 L9,15.1Z" fill="#b8800c"/>
 <path d="M9,6 H12.5 L13.5,7.5 H14.5 L15.2,9 L16.8,11 V16 H10.4 L9,14.8Z" fill="#000"/>
 <rect x="10" y="7" width="2" height="1" fill="#fff"/><rect x="11" y="9" width="2" height="1" fill="#fff"/>
 <path d="M11.2,11 H13 V12.8 H15.6 V15 H11.2Z" fill="#fff"/>
</svg>
<div class="abs" style="left:292px;top:776px;font-size:12px;color:#000;white-space:nowrap;will-change:transform;text-shadow:0.3px 0 0 rgba(0,0,0,.5)">올일러<b class="hy" style="background:#222"></b>파일</div>

<!-- status -->
<div class="abs" style="left:0;top:801px;width:1070px;text-align:center;font-size:11px;color:#141414;will-change:transform;text-shadow:0.3px 0 0 rgba(0,0,0,.4),0 1px 0 rgba(255,255,255,.3)">26개 항목, <i style="font-style:normal;font-size:11.5px">55.44GB</i> 사용 가능</div>
<svg class="abs" style="left:1055px;top:805px" width="12" height="12"><path d="M1,11 L11,1 M5,11 L11,5 M9,11 L11,9" stroke="#555" stroke-width="1"/><path d="M2,11 L11,2 M6,11 L11,6" stroke="rgba(255,255,255,.5)" stroke-width="0.8"/></svg>
</body></html>
